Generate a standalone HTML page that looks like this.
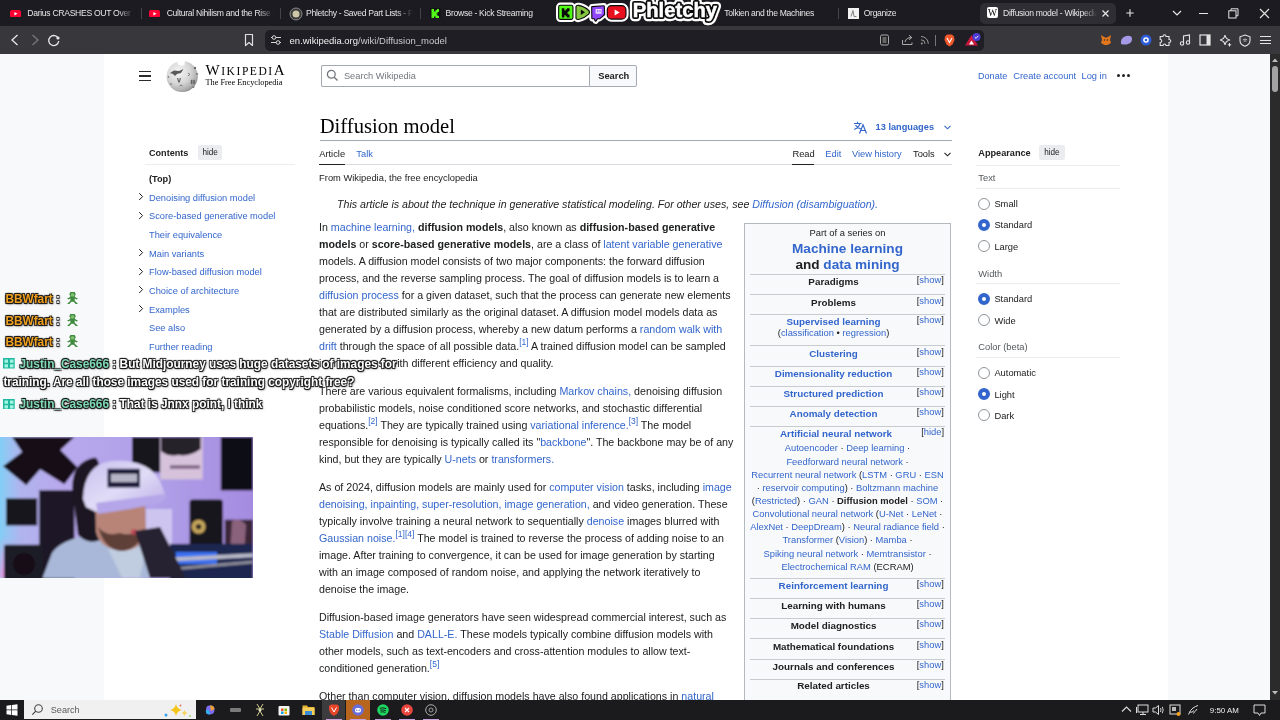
<!DOCTYPE html><html><head><meta charset="utf-8"><style>
html,body{margin:0;padding:0}
body{width:1280px;height:720px;overflow:hidden;position:relative;background:#f8f9fa;font-family:'Liberation Sans',sans-serif}
.r{position:absolute;display:block}
.t{position:absolute;white-space:nowrap}
.a{color:#3366cc}
.p{position:absolute;white-space:nowrap;font-size:10.667px;line-height:17.07px;color:#202122;font-family:'Liberation Sans',sans-serif}
.p b{font-weight:bold}
sup{font-size:80%;line-height:1;vertical-align:super;color:#3366cc}
.tabt{overflow:hidden;-webkit-mask-image:linear-gradient(90deg,#000 85%,transparent 100%);mask-image:linear-gradient(90deg,#000 85%,transparent 100%)}
.chat{position:absolute;white-space:nowrap;font-weight:bold;font-family:'Liberation Sans',sans-serif;
 text-shadow:-0.8px -0.8px 0.7px #151515,0.8px -0.8px 0.7px #151515,-0.8px 0.8px 0.7px #151515,0.8px 0.8px 0.7px #151515,0 0 1.5px #222,1px 1px 2.5px rgba(0,0,0,0.55)}
</style></head><body><div id="root" style="position:absolute;left:0;top:0;width:1280px;height:720px;overflow:hidden;will-change:transform"><div class="r" style="left:0.00px;top:54.00px;width:1280.00px;height:646.00px;background:#f8f9fa;"></div>
<div class="r" style="left:104.00px;top:54.00px;width:1064.00px;height:646.00px;background:#ffffff;"></div>
<div class="r" style="left:139.00px;top:71.00px;width:12.00px;height:1.35px;background:#2a2b2c;"></div>
<div class="r" style="left:139.00px;top:75.30px;width:12.00px;height:1.35px;background:#2a2b2c;"></div>
<div class="r" style="left:139.00px;top:79.60px;width:12.00px;height:1.35px;background:#2a2b2c;"></div>
<svg class="r" style="left:164.5px;top:60px" width="34" height="32" viewBox="0 0 34 32">
<defs><radialGradient id="gl" cx="0.38" cy="0.35" r="0.7"><stop offset="0" stop-color="#f6f6f6"/><stop offset="0.55" stop-color="#d6d6d6"/><stop offset="0.85" stop-color="#b0b0b0"/><stop offset="1" stop-color="#8a8a8a"/></radialGradient>
<filter id="gb"><feGaussianBlur stdDeviation="0.35"/></filter></defs>
<g filter="url(#gb)">
<circle cx="17.2" cy="16.5" r="15.6" fill="url(#gl)"/>
<path d="M11.5 0 L20 0 L19.5 5 Q16 6.5 13 4.5 Z" fill="#fff"/>
<path d="M5 13 L9 10.5 L14 11 L18.5 9 L16 13 L12 14 L10 16 L8 14 Z" fill="#5a5a5a"/>
<path d="M12 18 h1.2 l0.8 3 l0.8 -3 h1.2 l-1.2 4.5 h-1.6 Z" fill="#666"/>
<path d="M26 20 h1.2 v4 h-1.2 Z M28.5 20 h1.2 v4 h-1.2 Z M26 22 h3.7" fill="#666" stroke="#666" stroke-width="0.4"/>
<path d="M14.5 26 q1.5 -2 3 0" fill="none" stroke="#777" stroke-width="1"/>
<path d="M23 13 l2 1.5 l-2 1.5" fill="none" stroke="#777" stroke-width="0.9"/>
<circle cx="30" cy="8" r="1.2" fill="#6a6a6a"/><circle cx="32" cy="14" r="1" fill="#777"/><circle cx="28.5" cy="27" r="1" fill="#777"/><circle cx="6" cy="24" r="0.9" fill="#888"/><circle cx="3.5" cy="17" r="0.9" fill="#888"/>
</g></svg>
<div class="t " style="left:205.50px;top:63.24px;font-size:15.000px;line-height:15.000px;color:#000;font-weight:normal;font-family:'Liberation Serif', serif;letter-spacing:1.55px;">W<span style="font-size:0.77em">IKIPEDI</span>A</div>
<div class="t " style="left:205.50px;top:78.65px;font-size:8.300px;line-height:8.300px;color:#000;font-weight:normal;font-family:'Liberation Serif', serif;">The Free Encyclopedia</div>
<div class="r" style="left:321px;top:65px;width:268px;height:21.5px;box-sizing:border-box;border:1px solid #a2a9b1;border-right:none;border-radius:2px 0 0 2px;background:#fff"></div>
<div class="r" style="left:589px;top:65px;width:47.5px;height:21.5px;box-sizing:border-box;border:1px solid #a2a9b1;border-radius:0 2px 2px 0;background:#f8f9fa"></div>
<svg class="r" style="left:326.00px;top:69.00px;" width="13" height="13" viewBox="0 0 13 13"><circle cx="5.3" cy="5.3" r="3.9" fill="none" stroke="#72777d" stroke-width="1.3"/><line x1="8.2" y1="8.2" x2="11.5" y2="11.5" stroke="#72777d" stroke-width="1.4"/></svg>
<div class="t " style="left:343.90px;top:71.75px;font-size:9.270px;line-height:9.270px;color:#72777d;font-weight:normal;font-family:'Liberation Sans', sans-serif;">Search Wikipedia</div>
<div class="t " style="left:598.20px;top:71.70px;font-size:9.330px;line-height:9.330px;color:#202122;font-weight:bold;font-family:'Liberation Sans', sans-serif;">Search</div>
<div class="t " style="left:978.00px;top:71.80px;font-size:9.100px;line-height:9.100px;color:#3366cc;font-weight:normal;font-family:'Liberation Sans', sans-serif;">Donate</div>
<div class="t " style="left:1013.20px;top:71.64px;font-size:9.290px;line-height:9.290px;color:#3366cc;font-weight:normal;font-family:'Liberation Sans', sans-serif;">Create account</div>
<div class="t " style="left:1081.50px;top:71.64px;font-size:9.290px;line-height:9.290px;color:#3366cc;font-weight:normal;font-family:'Liberation Sans', sans-serif;">Log in</div>
<div class="r" style="left:1117.30px;top:74.3px;width:3px;height:3px;border-radius:50%;background:#202122"></div>
<div class="r" style="left:1121.90px;top:74.3px;width:3px;height:3px;border-radius:50%;background:#202122"></div>
<div class="r" style="left:1126.50px;top:74.3px;width:3px;height:3px;border-radius:50%;background:#202122"></div>
<div class="t " style="left:149.00px;top:148.80px;font-size:9.100px;line-height:9.100px;color:#202122;font-weight:bold;font-family:'Liberation Sans', sans-serif;">Contents</div>
<div class="r" style="left:197.50px;top:145.30px;width:24.80px;height:14.40px;background:#eaecf0;border-radius:2px;"></div>
<div class="t " style="left:202.40px;top:148.66px;font-size:8.200px;line-height:8.200px;color:#202122;font-weight:normal;font-family:'Liberation Sans', sans-serif;">hide</div>
<div class="r" style="left:145.30px;top:164.30px;width:149.40px;height:0.80px;background:#eaecf0;"></div>
<div class="t " style="left:149.00px;top:175.11px;font-size:9.200px;line-height:9.200px;color:#202122;font-weight:bold;font-family:'Liberation Sans', sans-serif;">(Top)</div>
<div class="t " style="left:149.00px;top:193.71px;font-size:9.290px;line-height:9.290px;color:#3366cc;font-weight:normal;font-family:'Liberation Sans', sans-serif;">Denoising diffusion model</div>
<svg class="r" style="left:137.00px;top:192.07px;" width="8" height="9" viewBox="0 0 8 9"><path d="M2.2 1.2 L5.6 4.6 L2.2 8" fill="none" stroke="#202122" stroke-width="1.0"/></svg>
<div class="t " style="left:149.00px;top:212.38px;font-size:9.290px;line-height:9.290px;color:#3366cc;font-weight:normal;font-family:'Liberation Sans', sans-serif;">Score-based generative model</div>
<svg class="r" style="left:137.00px;top:210.74px;" width="8" height="9" viewBox="0 0 8 9"><path d="M2.2 1.2 L5.6 4.6 L2.2 8" fill="none" stroke="#202122" stroke-width="1.0"/></svg>
<div class="t " style="left:149.00px;top:231.05px;font-size:9.290px;line-height:9.290px;color:#3366cc;font-weight:normal;font-family:'Liberation Sans', sans-serif;">Their equivalence</div>
<div class="t " style="left:149.00px;top:249.72px;font-size:9.290px;line-height:9.290px;color:#3366cc;font-weight:normal;font-family:'Liberation Sans', sans-serif;">Main variants</div>
<svg class="r" style="left:137.00px;top:248.08px;" width="8" height="9" viewBox="0 0 8 9"><path d="M2.2 1.2 L5.6 4.6 L2.2 8" fill="none" stroke="#202122" stroke-width="1.0"/></svg>
<div class="t " style="left:149.00px;top:268.39px;font-size:9.290px;line-height:9.290px;color:#3366cc;font-weight:normal;font-family:'Liberation Sans', sans-serif;">Flow-based diffusion model</div>
<svg class="r" style="left:137.00px;top:266.75px;" width="8" height="9" viewBox="0 0 8 9"><path d="M2.2 1.2 L5.6 4.6 L2.2 8" fill="none" stroke="#202122" stroke-width="1.0"/></svg>
<div class="t " style="left:149.00px;top:287.06px;font-size:9.290px;line-height:9.290px;color:#3366cc;font-weight:normal;font-family:'Liberation Sans', sans-serif;">Choice of architecture</div>
<svg class="r" style="left:137.00px;top:285.42px;" width="8" height="9" viewBox="0 0 8 9"><path d="M2.2 1.2 L5.6 4.6 L2.2 8" fill="none" stroke="#202122" stroke-width="1.0"/></svg>
<div class="t " style="left:149.00px;top:305.73px;font-size:9.290px;line-height:9.290px;color:#3366cc;font-weight:normal;font-family:'Liberation Sans', sans-serif;">Examples</div>
<svg class="r" style="left:137.00px;top:304.09px;" width="8" height="9" viewBox="0 0 8 9"><path d="M2.2 1.2 L5.6 4.6 L2.2 8" fill="none" stroke="#202122" stroke-width="1.0"/></svg>
<div class="t " style="left:149.00px;top:324.40px;font-size:9.290px;line-height:9.290px;color:#3366cc;font-weight:normal;font-family:'Liberation Sans', sans-serif;">See also</div>
<div class="t " style="left:149.00px;top:343.07px;font-size:9.290px;line-height:9.290px;color:#3366cc;font-weight:normal;font-family:'Liberation Sans', sans-serif;">Further reading</div>
<div class="t " style="left:319.75px;top:115.95px;font-size:20.600px;line-height:20.600px;color:#000;font-weight:normal;font-family:'Liberation Serif', serif;">Diffusion model</div>
<div class="r" style="left:319.75px;top:139.80px;width:632.00px;height:0.80px;background:#a2a9b1;"></div>
<svg class="r" style="left:853.00px;top:121.00px;" width="16" height="13" viewBox="0 0 16 13"><path d="M1 2.5 H8.5 M4.5 0.8 V2.5 M7 2.5 Q5.5 7 1.2 8.5 M2.5 4 Q4 7 8 8" fill="none" stroke="#36c" stroke-width="1.1"/><path d="M6.5 12.5 L10 3.8 L13.5 12.5 M7.8 9.5 H12.2" fill="none" stroke="#36c" stroke-width="1.2"/></svg>
<div class="t " style="left:875.60px;top:123.40px;font-size:9.220px;line-height:9.220px;color:#3366cc;font-weight:bold;font-family:'Liberation Sans', sans-serif;">13 languages</div>
<svg class="r" style="left:943.00px;top:124.00px;" width="9" height="7" viewBox="0 0 9 7"><path d="M1.5 1.8 L4.5 4.8 L7.5 1.8" fill="none" stroke="#36c" stroke-width="1.1"/></svg>
<div class="t " style="left:319.20px;top:149.70px;font-size:9.330px;line-height:9.330px;color:#202122;font-weight:normal;font-family:'Liberation Sans', sans-serif;">Article</div>
<div class="r" style="left:319.20px;top:163.90px;width:25.60px;height:1.40px;background:#202122;"></div>
<div class="t " style="left:356.30px;top:149.70px;font-size:9.330px;line-height:9.330px;color:#3366cc;font-weight:normal;font-family:'Liberation Sans', sans-serif;">Talk</div>
<div class="r" style="left:319.75px;top:164.40px;width:632.00px;height:0.90px;background:#d8dbdf;"></div>
<div class="r" style="left:319.20px;top:163.90px;width:25.60px;height:1.50px;background:#202122;"></div>
<div class="t " style="left:792.40px;top:149.70px;font-size:9.330px;line-height:9.330px;color:#202122;font-weight:normal;font-family:'Liberation Sans', sans-serif;">Read</div>
<div class="r" style="left:792.40px;top:163.60px;width:21.60px;height:1.50px;background:#202122;"></div>
<div class="t " style="left:825.30px;top:149.70px;font-size:9.330px;line-height:9.330px;color:#3366cc;font-weight:normal;font-family:'Liberation Sans', sans-serif;">Edit</div>
<div class="t " style="left:852.00px;top:149.77px;font-size:9.250px;line-height:9.250px;color:#3366cc;font-weight:normal;font-family:'Liberation Sans', sans-serif;">View history</div>
<div class="t " style="left:913.00px;top:149.70px;font-size:9.330px;line-height:9.330px;color:#202122;font-weight:normal;font-family:'Liberation Sans', sans-serif;">Tools</div>
<svg class="r" style="left:943.00px;top:151.00px;" width="9" height="7" viewBox="0 0 9 7"><path d="M1.5 1.8 L4.5 4.8 L7.5 1.8" fill="none" stroke="#202122" stroke-width="1.1"/></svg>
<div class="t " style="left:319.10px;top:173.60px;font-size:9.330px;line-height:9.330px;color:#202122;font-weight:normal;font-family:'Liberation Sans', sans-serif;">From Wikipedia, the free encyclopedia</div>
<div class="t " style="left:337.10px;top:199.20px;font-size:10.630px;line-height:10.630px;color:#202122;font-weight:normal;font-style:italic;font-family:'Liberation Sans', sans-serif;">This article is about the technique in generative statistical modeling. For other uses, see <span class="a">Diffusion (disambiguation).</span></div>
<div class="p" style="left:319px;top:218.57px">In <span class="a">machine learning,</span> <b>diffusion models</b>, also known as <b>diffusion-based generative</b><br><b>models</b> or <b>score-based generative models</b>, are a class of <span class="a">latent variable generative</span><br>models. A diffusion model consists of two major components: the forward diffusion<br>process, and the reverse sampling process. The goal of diffusion models is to learn a<br><span class="a">diffusion process</span> for a given dataset, such that the process can generate new elements<br>that are distributed similarly as the original dataset. A diffusion model models data as<br>generated by a diffusion process, whereby a new datum performs a <span class="a">random walk with</span><br><span class="a">drift</span> through the space of all possible data.<sup>[1]</sup> A trained diffusion model can be sampled<br>in many ways, with different efficiency and quality.</div>
<div class="p" style="left:319px;top:382.77px">There are various equivalent formalisms, including <span class="a">Markov chains,</span> denoising diffusion<br>probabilistic models, noise conditioned score networks, and stochastic differential<br>equations.<sup>[2]</sup> They are typically trained using <span class="a">variational inference.</span><sup>[3]</sup> The model<br>responsible for denoising is typically called its "<span class="a">backbone</span>". The backbone may be of any<br>kind, but they are typically <span class="a">U-nets</span> or <span class="a">transformers.</span></div>
<div class="p" style="left:319px;top:478.87px">As of 2024, diffusion models are mainly used for <span class="a">computer vision</span> tasks, including <span class="a">image</span><br><span class="a">denoising, inpainting, super-resolution, image generation,</span> and video generation. These<br>typically involve training a neural network to sequentially <span class="a">denoise</span> images blurred with<br><span class="a">Gaussian noise.</span><sup>[1][4]</sup> The model is trained to reverse the process of adding noise to an<br>image. After training to convergence, it can be used for image generation by starting<br>with an image composed of random noise, and applying the network iteratively to<br>denoise the image.</div>
<div class="p" style="left:319px;top:608.97px">Diffusion-based image generators have seen widespread commercial interest, such as<br><span class="a">Stable Diffusion</span> and <span class="a">DALL-E.</span> These models typically combine diffusion models with<br>other models, such as text-encoders and cross-attention modules to allow text-<br>conditioned generation.<sup>[5]</sup></div>
<div class="p" style="left:319px;top:687.87px">Other than computer vision, diffusion models have also found applications in <span class="a">natural</span></div>
<div class="r" style="left:744.2px;top:223.2px;width:207px;height:490px;box-sizing:border-box;border:1px solid #b4b9be;background:#f8f9fa"></div>
<div class="t" style="left:737.50px;width:220px;text-align:center;top:228.57px;font-size:9.37px;line-height:9.37px;color:#202122;font-weight:normal">Part of a series on</div>
<div class="t" style="left:737.50px;width:220px;text-align:center;top:241.80px;font-size:13.59px;line-height:13.59px;color:#202122;font-weight:bold"><span class="a">Machine learning</span></div>
<div class="t" style="left:737.50px;width:220px;text-align:center;top:257.60px;font-size:13.59px;line-height:13.59px;color:#202122;font-weight:bold">and <span class="a">data mining</span></div>
<div class="r" style="left:749.80px;top:274.10px;width:195.30px;height:1.10px;background:#c8ccd1;"></div>
<div class="t" style="left:723.50px;width:220px;text-align:center;top:277.27px;font-size:9.84px;line-height:9.84px;color:#202122;font-weight:bold">Paradigms</div>
<div class="t " style="left:916.70px;top:276.36px;font-size:9.377px;line-height:9.377px;color:#202122;font-weight:normal;font-family:'Liberation Sans', sans-serif;">[<span class="a">show</span>]</div>
<div class="r" style="left:749.80px;top:294.30px;width:195.30px;height:1.10px;background:#c8ccd1;"></div>
<div class="t" style="left:723.50px;width:220px;text-align:center;top:298.17px;font-size:9.84px;line-height:9.84px;color:#202122;font-weight:bold">Problems</div>
<div class="t " style="left:916.70px;top:297.26px;font-size:9.377px;line-height:9.377px;color:#202122;font-weight:normal;font-family:'Liberation Sans', sans-serif;">[<span class="a">show</span>]</div>
<div class="r" style="left:749.80px;top:313.80px;width:195.30px;height:1.10px;background:#c8ccd1;"></div>
<div class="t" style="left:723.50px;width:220px;text-align:center;top:316.87px;font-size:9.84px;line-height:9.84px;color:#202122;font-weight:bold"><span class="a">Supervised learning</span></div>
<div class="t" style="left:723.50px;width:220px;text-align:center;top:328.87px;font-size:9.37px;line-height:9.37px;color:#202122;font-weight:normal">(<span class="a">classification</span> • <span class="a">regression</span>)</div>
<div class="t " style="left:916.70px;top:315.96px;font-size:9.377px;line-height:9.377px;color:#202122;font-weight:normal;font-family:'Liberation Sans', sans-serif;">[<span class="a">show</span>]</div>
<div class="r" style="left:749.80px;top:345.00px;width:195.30px;height:1.10px;background:#c8ccd1;"></div>
<div class="t" style="left:723.50px;width:220px;text-align:center;top:348.97px;font-size:9.84px;line-height:9.84px;color:#202122;font-weight:bold"><span class="a">Clustering</span></div>
<div class="t " style="left:916.70px;top:348.06px;font-size:9.377px;line-height:9.377px;color:#202122;font-weight:normal;font-family:'Liberation Sans', sans-serif;">[<span class="a">show</span>]</div>
<div class="r" style="left:749.80px;top:366.00px;width:195.30px;height:1.10px;background:#c8ccd1;"></div>
<div class="t" style="left:723.50px;width:220px;text-align:center;top:369.37px;font-size:9.84px;line-height:9.84px;color:#202122;font-weight:bold"><span class="a">Dimensionality reduction</span></div>
<div class="t " style="left:916.70px;top:368.46px;font-size:9.377px;line-height:9.377px;color:#202122;font-weight:normal;font-family:'Liberation Sans', sans-serif;">[<span class="a">show</span>]</div>
<div class="r" style="left:749.80px;top:385.80px;width:195.30px;height:1.10px;background:#c8ccd1;"></div>
<div class="t" style="left:723.50px;width:220px;text-align:center;top:389.37px;font-size:9.84px;line-height:9.84px;color:#202122;font-weight:bold"><span class="a">Structured prediction</span></div>
<div class="t " style="left:916.70px;top:388.46px;font-size:9.377px;line-height:9.377px;color:#202122;font-weight:normal;font-family:'Liberation Sans', sans-serif;">[<span class="a">show</span>]</div>
<div class="r" style="left:749.80px;top:405.70px;width:195.30px;height:1.10px;background:#c8ccd1;"></div>
<div class="t" style="left:723.50px;width:220px;text-align:center;top:409.27px;font-size:9.84px;line-height:9.84px;color:#202122;font-weight:bold"><span class="a">Anomaly detection</span></div>
<div class="t " style="left:916.70px;top:408.36px;font-size:9.377px;line-height:9.377px;color:#202122;font-weight:normal;font-family:'Liberation Sans', sans-serif;">[<span class="a">show</span>]</div>
<div class="r" style="left:749.80px;top:425.90px;width:195.30px;height:1.10px;background:#c8ccd1;"></div>
<div class="t" style="left:726.00px;width:220px;text-align:center;top:429.27px;font-size:9.84px;line-height:9.84px;color:#202122;font-weight:bold"><span class="a">Artificial neural network</span></div>
<div class="t " style="left:921.20px;top:428.36px;font-size:9.377px;line-height:9.377px;color:#202122;font-weight:normal;font-family:'Liberation Sans', sans-serif;">[<span class="a">hide</span>]</div>
<div class="t" style="left:737.50px;width:220px;text-align:center;top:444.47px;font-size:9.37px;line-height:9.37px;color:#202122;font-weight:normal"><span class="a">Autoencoder</span> · <span class="a">Deep learning</span> ·</div>
<div class="t" style="left:737.50px;width:220px;text-align:center;top:457.61px;font-size:9.37px;line-height:9.37px;color:#202122;font-weight:normal"><span class="a">Feedforward neural network</span> ·</div>
<div class="t" style="left:737.50px;width:220px;text-align:center;top:470.75px;font-size:9.37px;line-height:9.37px;color:#202122;font-weight:normal"><span class="a">Recurrent neural network</span> (<span class="a">LSTM</span> · <span class="a">GRU</span> · <span class="a">ESN</span></div>
<div class="t" style="left:737.50px;width:220px;text-align:center;top:483.89px;font-size:9.37px;line-height:9.37px;color:#202122;font-weight:normal">· <span class="a">reservoir computing</span>) · <span class="a">Boltzmann machine</span></div>
<div class="t" style="left:737.50px;width:220px;text-align:center;top:497.03px;font-size:9.37px;line-height:9.37px;color:#202122;font-weight:normal">(<span class="a">Restricted</span>) · <span class="a">GAN</span> · <b>Diffusion model</b> · <span class="a">SOM</span> ·</div>
<div class="t" style="left:737.50px;width:220px;text-align:center;top:510.17px;font-size:9.37px;line-height:9.37px;color:#202122;font-weight:normal"><span class="a">Convolutional neural network</span> (<span class="a">U-Net</span> · <span class="a">LeNet</span> ·</div>
<div class="t" style="left:737.50px;width:220px;text-align:center;top:523.31px;font-size:9.37px;line-height:9.37px;color:#202122;font-weight:normal"><span class="a">AlexNet</span> · <span class="a">DeepDream</span>) · <span class="a">Neural radiance field</span> ·</div>
<div class="t" style="left:737.50px;width:220px;text-align:center;top:536.45px;font-size:9.37px;line-height:9.37px;color:#202122;font-weight:normal"><span class="a">Transformer</span> (<span class="a">Vision</span>) · <span class="a">Mamba</span> ·</div>
<div class="t" style="left:737.50px;width:220px;text-align:center;top:549.59px;font-size:9.37px;line-height:9.37px;color:#202122;font-weight:normal"><span class="a">Spiking neural network</span> · <span class="a">Memtransistor</span> ·</div>
<div class="t" style="left:737.50px;width:220px;text-align:center;top:562.73px;font-size:9.37px;line-height:9.37px;color:#202122;font-weight:normal"><span class="a">Electrochemical RAM</span> (ECRAM)</div>
<div class="r" style="left:749.80px;top:578.30px;width:195.30px;height:1.10px;background:#c8ccd1;"></div>
<div class="t" style="left:723.50px;width:220px;text-align:center;top:581.27px;font-size:9.84px;line-height:9.84px;color:#3366cc;font-weight:bold">Reinforcement learning</div>
<div class="t " style="left:916.70px;top:580.36px;font-size:9.377px;line-height:9.377px;color:#202122;font-weight:normal;font-family:'Liberation Sans', sans-serif;">[<span class="a">show</span>]</div>
<div class="r" style="left:749.80px;top:598.30px;width:195.30px;height:1.10px;background:#c8ccd1;"></div>
<div class="t" style="left:723.50px;width:220px;text-align:center;top:601.27px;font-size:9.84px;line-height:9.84px;color:#202122;font-weight:bold">Learning with humans</div>
<div class="t " style="left:916.70px;top:600.36px;font-size:9.377px;line-height:9.377px;color:#202122;font-weight:normal;font-family:'Liberation Sans', sans-serif;">[<span class="a">show</span>]</div>
<div class="r" style="left:749.80px;top:618.10px;width:195.30px;height:1.10px;background:#c8ccd1;"></div>
<div class="t" style="left:723.50px;width:220px;text-align:center;top:620.77px;font-size:9.84px;line-height:9.84px;color:#202122;font-weight:bold">Model diagnostics</div>
<div class="t " style="left:916.70px;top:619.86px;font-size:9.377px;line-height:9.377px;color:#202122;font-weight:normal;font-family:'Liberation Sans', sans-serif;">[<span class="a">show</span>]</div>
<div class="r" style="left:749.80px;top:638.20px;width:195.30px;height:1.10px;background:#c8ccd1;"></div>
<div class="t" style="left:723.50px;width:220px;text-align:center;top:641.77px;font-size:9.84px;line-height:9.84px;color:#202122;font-weight:bold">Mathematical foundations</div>
<div class="t " style="left:916.70px;top:640.86px;font-size:9.377px;line-height:9.377px;color:#202122;font-weight:normal;font-family:'Liberation Sans', sans-serif;">[<span class="a">show</span>]</div>
<div class="r" style="left:749.80px;top:658.60px;width:195.30px;height:1.10px;background:#c8ccd1;"></div>
<div class="t" style="left:723.50px;width:220px;text-align:center;top:661.57px;font-size:9.84px;line-height:9.84px;color:#202122;font-weight:bold">Journals and conferences</div>
<div class="t " style="left:916.70px;top:660.66px;font-size:9.377px;line-height:9.377px;color:#202122;font-weight:normal;font-family:'Liberation Sans', sans-serif;">[<span class="a">show</span>]</div>
<div class="r" style="left:749.80px;top:678.50px;width:195.30px;height:1.10px;background:#c8ccd1;"></div>
<div class="t" style="left:723.50px;width:220px;text-align:center;top:681.47px;font-size:9.84px;line-height:9.84px;color:#202122;font-weight:bold">Related articles</div>
<div class="t " style="left:916.70px;top:680.56px;font-size:9.377px;line-height:9.377px;color:#202122;font-weight:normal;font-family:'Liberation Sans', sans-serif;">[<span class="a">show</span>]</div>
<div class="t " style="left:978.30px;top:149.14px;font-size:9.170px;line-height:9.170px;color:#202122;font-weight:bold;font-family:'Liberation Sans', sans-serif;">Appearance</div>
<div class="r" style="left:1039.40px;top:145.20px;width:25.80px;height:14.60px;background:#eaecf0;border-radius:2px;"></div>
<div class="t " style="left:1044.20px;top:148.86px;font-size:8.200px;line-height:8.200px;color:#202122;font-weight:normal;font-family:'Liberation Sans', sans-serif;">hide</div>
<div class="r" style="left:976.00px;top:164.80px;width:144.00px;height:0.80px;background:#eaecf0;"></div>
<div class="t " style="left:978.30px;top:173.80px;font-size:9.330px;line-height:9.330px;color:#54595d;font-weight:normal;font-family:'Liberation Sans', sans-serif;">Text</div>
<div class="r" style="left:976.00px;top:188.00px;width:144.00px;height:0.80px;background:#eaecf0;"></div>
<div class="r" style="left:978px;top:197.50px;width:12px;height:12px;border-radius:50%;box-sizing:border-box;border:1.2px solid #8f959b;background:#fff"></div>
<div class="t " style="left:994.40px;top:199.80px;font-size:9.330px;line-height:9.330px;color:#202122;font-weight:normal;font-family:'Liberation Sans', sans-serif;">Small</div>
<div class="r" style="left:978px;top:218.90px;width:12px;height:12px;border-radius:50%;box-sizing:border-box;border:4.1px solid #3366cc;background:#fff"></div>
<div class="t " style="left:994.40px;top:221.20px;font-size:9.330px;line-height:9.330px;color:#202122;font-weight:normal;font-family:'Liberation Sans', sans-serif;">Standard</div>
<div class="r" style="left:978px;top:240.20px;width:12px;height:12px;border-radius:50%;box-sizing:border-box;border:1.2px solid #8f959b;background:#fff"></div>
<div class="t " style="left:994.40px;top:242.50px;font-size:9.330px;line-height:9.330px;color:#202122;font-weight:normal;font-family:'Liberation Sans', sans-serif;">Large</div>
<div class="t " style="left:978.30px;top:269.60px;font-size:9.330px;line-height:9.330px;color:#54595d;font-weight:normal;font-family:'Liberation Sans', sans-serif;">Width</div>
<div class="r" style="left:976.00px;top:283.00px;width:144.00px;height:0.80px;background:#eaecf0;"></div>
<div class="r" style="left:978px;top:292.80px;width:12px;height:12px;border-radius:50%;box-sizing:border-box;border:4.1px solid #3366cc;background:#fff"></div>
<div class="t " style="left:994.40px;top:295.10px;font-size:9.330px;line-height:9.330px;color:#202122;font-weight:normal;font-family:'Liberation Sans', sans-serif;">Standard</div>
<div class="r" style="left:978px;top:314.20px;width:12px;height:12px;border-radius:50%;box-sizing:border-box;border:1.2px solid #8f959b;background:#fff"></div>
<div class="t " style="left:994.40px;top:316.50px;font-size:9.330px;line-height:9.330px;color:#202122;font-weight:normal;font-family:'Liberation Sans', sans-serif;">Wide</div>
<div class="t " style="left:978.30px;top:342.90px;font-size:9.330px;line-height:9.330px;color:#54595d;font-weight:normal;font-family:'Liberation Sans', sans-serif;">Color (beta)</div>
<div class="r" style="left:976.00px;top:357.20px;width:144.00px;height:0.80px;background:#eaecf0;"></div>
<div class="r" style="left:978px;top:367.10px;width:12px;height:12px;border-radius:50%;box-sizing:border-box;border:1.2px solid #8f959b;background:#fff"></div>
<div class="t " style="left:994.40px;top:369.40px;font-size:9.330px;line-height:9.330px;color:#202122;font-weight:normal;font-family:'Liberation Sans', sans-serif;">Automatic</div>
<div class="r" style="left:978px;top:388.20px;width:12px;height:12px;border-radius:50%;box-sizing:border-box;border:4.1px solid #3366cc;background:#fff"></div>
<div class="t " style="left:994.40px;top:390.50px;font-size:9.330px;line-height:9.330px;color:#202122;font-weight:normal;font-family:'Liberation Sans', sans-serif;">Light</div>
<div class="r" style="left:978px;top:409.40px;width:12px;height:12px;border-radius:50%;box-sizing:border-box;border:1.2px solid #8f959b;background:#fff"></div>
<div class="t " style="left:994.40px;top:411.70px;font-size:9.330px;line-height:9.330px;color:#202122;font-weight:normal;font-family:'Liberation Sans', sans-serif;">Dark</div>
<div class="r" style="left:1270.00px;top:54.00px;width:10.00px;height:646.00px;background:#2b2b2b;"></div>
<svg class="r" style="left:1270.00px;top:56.00px;" width="10" height="8" viewBox="0 0 10 8"><path d="M2 6 L5 2.5 L8 6 Z" fill="#bdbdbd"/></svg>
<div class="r" style="left:1272.00px;top:66.00px;width:6.00px;height:26.00px;background:#a3a3a3;border-radius:3px;"></div>
<svg class="r" style="left:1270.00px;top:689.00px;" width="10" height="8" viewBox="0 0 10 8"><path d="M2 2 L5 5.5 L8 2 Z" fill="#bdbdbd"/></svg>
<div class="r" style="left:0.00px;top:0.00px;width:1280.00px;height:26.00px;background:#1c1b21;"></div>
<div class="r" style="left:0.00px;top:26.00px;width:1280.00px;height:28.00px;background:#38373c;"></div>
<div class="r" style="left:979.70px;top:2.50px;width:135.90px;height:21.30px;background:#2f2e34;border-radius:5px;"></div>
<svg class="r" style="left:10.00px;top:9.50px;" width="11" height="7.5" viewBox="0 0 11 7.5"><rect x="0" y="0" width="11" height="7.5" rx="2" fill="#ff0033"/><path d="M4.4 1.9 L7.5 3.8 L4.4 5.6 Z" fill="#fff"/></svg>
<div class="t tabt" style="left:27.30px;top:9.02px;width:107px;font-size:8.6px;line-height:8.6px;letter-spacing:-0.3px;color:#e6e6e8">Darius CRASHES OUT Over Xehanort Again</div>
<div class="r" style="left:140.90px;top:8.00px;width:1.00px;height:11.00px;background:#45444a;"></div>
<svg class="r" style="left:149.40px;top:9.50px;" width="11" height="7.5" viewBox="0 0 11 7.5"><rect x="0" y="0" width="11" height="7.5" rx="2" fill="#ff0033"/><path d="M4.4 1.9 L7.5 3.8 L4.4 5.6 Z" fill="#fff"/></svg>
<div class="t tabt" style="left:166.70px;top:9.02px;width:107px;font-size:8.6px;line-height:8.6px;letter-spacing:-0.3px;color:#e6e6e8">Cultural Nihilism and the Rise of</div>
<div class="r" style="left:280.30px;top:8.00px;width:1.00px;height:11.00px;background:#45444a;"></div>
<svg class="r" style="left:288.80px;top:6.50px;" width="14" height="14" viewBox="0 0 14 14"><circle cx="7" cy="7" r="6" fill="#3a3a3a" stroke="#888" stroke-width="1"/><circle cx="7" cy="7" r="3.5" fill="#cfc7a8"/></svg>
<div class="t tabt" style="left:306.10px;top:9.02px;width:107px;font-size:8.6px;line-height:8.6px;letter-spacing:-0.3px;color:#e6e6e8">Phletchy - Saved Part Lists - PCPartPicker</div>
<div class="r" style="left:419.70px;top:8.00px;width:1.00px;height:11.00px;background:#45444a;"></div>
<svg class="r" style="left:430.20px;top:8.20px;" width="10.5" height="10" viewBox="0 0 10.5 10"><rect x="0" y="0" width="10.5" height="10" fill="#111"/><path d="M1.5 1 h2.5 v2.5 h1.5 v-1.5 h1.5 v-1 h2 v3 h-1.5 v1.5 h-1 v1 h1 v1.5 h1.5 v3 h-2 v-1 h-1.5 v-1.5 h-1.5 v2.5 h-2.5 z" fill="#53fc18"/></svg>
<div class="t tabt" style="left:445.50px;top:9.02px;width:107px;font-size:8.6px;line-height:8.6px;letter-spacing:-0.3px;color:#e6e6e8">Browse - Kick Streaming</div>
<div class="r" style="left:559.10px;top:8.00px;width:1.00px;height:11.00px;background:#45444a;"></div>
<svg class="r" style="left:567.60px;top:9.50px;" width="11" height="7.5" viewBox="0 0 11 7.5"><rect x="0" y="0" width="11" height="7.5" rx="2" fill="#ff0033"/><path d="M4.4 1.9 L7.5 3.8 L4.4 5.6 Z" fill="#fff"/></svg>
<div class="t tabt" style="left:584.90px;top:9.02px;width:107px;font-size:8.6px;line-height:8.6px;letter-spacing:-0.3px;color:#e6e6e8">Kick Stream Thing</div>
<div class="r" style="left:698.50px;top:8.00px;width:1.00px;height:11.00px;background:#45444a;"></div>
<svg class="r" style="left:707.00px;top:9.50px;" width="11" height="7.5" viewBox="0 0 11 7.5"><rect x="0" y="0" width="11" height="7.5" rx="2" fill="#ff0033"/><path d="M4.4 1.9 L7.5 3.8 L4.4 5.6 Z" fill="#fff"/></svg>
<div class="t tabt" style="left:724.30px;top:9.02px;width:107px;font-size:8.6px;line-height:8.6px;letter-spacing:-0.3px;color:#e6e6e8">Tolkien and the Machines</div>
<div class="r" style="left:837.90px;top:8.00px;width:1.00px;height:11.00px;background:#45444a;"></div>
<svg class="r" style="left:848.00px;top:7.70px;" width="11" height="11" viewBox="0 0 11 11"><rect width="11" height="11" fill="#f2f2f2"/><path d="M3 8.5 L5 2.5 L6 8.5 M6 8.5 L8.5 8.5" stroke="#777" stroke-width="0.9" fill="none"/></svg>
<div class="t tabt" style="left:863.70px;top:9.02px;width:107px;font-size:8.6px;line-height:8.6px;letter-spacing:-0.3px;color:#e6e6e8">Organize</div>
<svg class="r" style="left:987.00px;top:7.40px;" width="11" height="11" viewBox="0 0 11 11"><rect width="11" height="11" rx="2" fill="#fff"/><text x="5.5" y="9" text-anchor="middle" font-family="Liberation Serif" font-size="9.5" fill="#000">W</text></svg>
<div class="t tabt" style="left:1003.10px;top:9.02px;width:94px;font-size:8.6px;line-height:8.6px;letter-spacing:-0.3px;color:#e6e6e8">Diffusion model - Wikipedia</div>
<svg class="r" style="left:1101.00px;top:8.50px;" width="9" height="9" viewBox="0 0 9 9"><path d="M1.5 1.5 L7.5 7.5 M7.5 1.5 L1.5 7.5" stroke="#e6e6e6" stroke-width="1.2"/></svg>
<svg class="r" style="left:1125.80px;top:8.80px;" width="8" height="8" viewBox="0 0 8 8"><path d="M4 0.3 V7.7 M0.3 4 H7.7" stroke="#e6e6e6" stroke-width="1.1"/></svg>
<svg class="r" style="left:1171.50px;top:10.00px;" width="10" height="6" viewBox="0 0 10 6"><path d="M1 1 L5 5 L9 1" fill="none" stroke="#e6e6e6" stroke-width="1.2"/></svg>
<div class="r" style="left:1198.60px;top:12.80px;width:9.00px;height:1.10px;background:#e6e6e6;"></div>
<svg class="r" style="left:1228.00px;top:7.50px;" width="11" height="11" viewBox="0 0 11 11"><rect x="0.8" y="2.8" width="7.2" height="7.2" fill="none" stroke="#e6e6e6" stroke-width="1"/><path d="M3 2.8 V0.8 H10 V7.8 H8" fill="none" stroke="#e6e6e6" stroke-width="1"/></svg>
<svg class="r" style="left:1258.50px;top:7.50px;" width="11" height="11" viewBox="0 0 11 11"><path d="M1 1 L10 10 M10 1 L1 10" stroke="#e6e6e6" stroke-width="1.1"/></svg>
<svg class="r" style="left:8.00px;top:33.00px;" width="14" height="14" viewBox="0 0 14 14"><path d="M9.5 2 L4 7 L9.5 12" fill="none" stroke="#e8e8e8" stroke-width="1.3"/></svg>
<svg class="r" style="left:28.00px;top:33.00px;" width="14" height="14" viewBox="0 0 14 14"><path d="M4.5 2 L10 7 L4.5 12" fill="none" stroke="#77767b" stroke-width="1.3"/></svg>
<svg class="r" style="left:47.00px;top:33.00px;" width="14" height="14" viewBox="0 0 14 14"><path d="M11.3 5.5 A5 5 0 1 0 11.7 8" fill="none" stroke="#e8e8e8" stroke-width="1.3"/><circle cx="11" cy="5" r="1.6" fill="#e8e8e8"/></svg>
<svg class="r" style="left:243.00px;top:33.00px;" width="12" height="14" viewBox="0 0 12 14"><path d="M2.5 1.5 H9.5 V12.5 L6 9.5 L2.5 12.5 Z" fill="none" stroke="#e0e0e0" stroke-width="1.2" stroke-linejoin="round"/></svg>
<div class="r" style="left:265.20px;top:30.00px;width:719.00px;height:20.50px;background:#1f1e24;border-radius:5px;"></div>
<svg class="r" style="left:270.00px;top:34.00px;" width="12" height="12" viewBox="0 0 12 12"><path d="M1 3.5 H11 M1 8.5 H11" stroke="#d8d8d8" stroke-width="1"/><circle cx="4" cy="3.5" r="1.8" fill="#1f1e24" stroke="#d8d8d8" stroke-width="1"/><circle cx="8" cy="8.5" r="1.8" fill="#1f1e24" stroke="#d8d8d8" stroke-width="1"/></svg>
<div class="t " style="left:289.60px;top:35.98px;font-size:9.470px;line-height:9.470px;color:#202122;font-weight:normal;font-family:'Liberation Sans', sans-serif;"><span style="color:#f0f0f2">en.wikipedia.org</span><span style="color:#c9c9cc">/wiki/Diffusion_model</span></div>
<svg class="r" style="left:879.00px;top:34.00px;" width="11" height="12" viewBox="0 0 11 12"><rect x="1.5" y="1" width="8" height="10" rx="1.5" fill="none" stroke="#aaa" stroke-width="1"/><rect x="3.5" y="3" width="4" height="6" fill="#666"/></svg>
<svg class="r" style="left:901.00px;top:34.00px;" width="13" height="12" viewBox="0 0 13 12"><path d="M1.5 6 V10.5 H11 V8.5" fill="none" stroke="#aaa" stroke-width="1"/><path d="M4 8 Q5 3.5 10.5 3.5 M8 1.2 L10.8 3.5 L8 5.8" fill="none" stroke="#aaa" stroke-width="1"/></svg>
<svg class="r" style="left:920.00px;top:34.00px;" width="10" height="12" viewBox="0 0 10 12"><circle cx="1.8" cy="9.5" r="1" fill="#999"/><path d="M1 5.8 A4 4 0 0 1 5 9.8 M1 2.5 A7.2 7.2 0 0 1 8.3 9.8" fill="none" stroke="#999" stroke-width="1"/></svg>
<div class="r" style="left:935.30px;top:34.50px;width:0.90px;height:11.00px;background:#777;"></div>
<svg class="r" style="left:943.50px;top:33.50px;" width="11" height="13" viewBox="0 0 11 13"><path d="M1 2.5 L3 0.5 H8 L10 2.5 L10.5 6 L8.5 10.5 L5.5 12.5 L2.5 10.5 L0.5 6 Z" fill="#f0582b"/><path d="M3 4 L5.5 8.5 L8 4" fill="none" stroke="#fff" stroke-width="1.1"/></svg>
<svg class="r" style="left:964.00px;top:31.50px;" width="18" height="15" viewBox="0 0 18 15"><path d="M1 13.5 L7.5 3 L14 13.5 Z" fill="#c8193c"/><path d="M5 12.5 L7.5 8.5 L10 12.5 Z" fill="#fff"/><circle cx="12.5" cy="5" r="4" fill="#4b3dd6"/><path d="M10.8 5.1 L12.1 6.3 L14.3 3.8" fill="none" stroke="#fff" stroke-width="0.9"/></svg>
<svg class="r" style="left:1099.50px;top:34.00px;" width="12" height="12" viewBox="0 0 12 12"><path d="M1 1 L5 3.5 H7 L11 1 L10 6 L11 9 L7.5 11 H4.5 L1 9 L2 6 Z" fill="#e2761b"/><circle cx="4.5" cy="6" r="0.8" fill="#333"/><circle cx="7.5" cy="6" r="0.8" fill="#333"/></svg>
<svg class="r" style="left:1119.50px;top:35.00px;" width="13" height="10" viewBox="0 0 13 10"><path d="M1 9 Q0 3 6 1 Q12 0 12 4 Q12 8 8 9 Q5 10 1 9 Z" fill="#a59ae8"/></svg>
<svg class="r" style="left:1139.50px;top:34.00px;" width="12" height="12" viewBox="0 0 12 12"><circle cx="6" cy="6" r="5.5" fill="#2f5cd8"/><circle cx="6" cy="6" r="2.8" fill="#fff"/><circle cx="6" cy="6" r="1.3" fill="#2f5cd8"/></svg>
<svg class="r" style="left:1158.50px;top:33.50px;" width="13" height="13" viewBox="0 0 13 13"><path d="M4 2.5 Q4 0.8 5.5 0.8 Q7 0.8 7 2.5 H10 V5.5 Q11.8 5.5 11.8 7 Q11.8 8.5 10 8.5 V11.5 H7 Q7 10 5.5 10 Q4 10 4 11.5 H1.2 V8.5 Q2.8 8.5 2.8 7 Q2.8 5.5 1.2 5.5 V2.5 Z" fill="none" stroke="#e4e4e4" stroke-width="1.1"/></svg>
<svg class="r" style="left:1179.00px;top:34.00px;" width="12" height="12" viewBox="0 0 12 12"><path d="M4.5 9.5 V2 L10.5 1 V8.5" fill="none" stroke="#e4e4e4" stroke-width="1.1"/><circle cx="3" cy="9.5" r="1.7" fill="none" stroke="#e4e4e4" stroke-width="1.1"/><circle cx="9" cy="8.5" r="1.7" fill="none" stroke="#e4e4e4" stroke-width="1.1"/></svg>
<svg class="r" style="left:1199.00px;top:34.00px;" width="12" height="12" viewBox="0 0 12 12"><rect x="1" y="1" width="10" height="10" fill="none" stroke="#e4e4e4" stroke-width="1.2"/><rect x="7.5" y="1" width="3.5" height="10" fill="#e4e4e4"/></svg>
<svg class="r" style="left:1219.00px;top:33.50px;" width="13" height="13" viewBox="0 0 13 13"><path d="M6 1 Q6.7 5.3 11 6 Q6.7 6.7 6 11 Q5.3 6.7 1 6 Q5.3 5.3 6 1 Z" fill="none" stroke="#e4e4e4" stroke-width="1.1"/><path d="M10.5 9 V12.5 M8.8 10.8 H12.2" stroke="#e4e4e4" stroke-width="1"/></svg>
<svg class="r" style="left:1239.00px;top:33.50px;" width="12" height="13" viewBox="0 0 12 13"><path d="M6 1 L11 2.8 V6.5 Q11 10.5 6 12.3 Q1 10.5 1 6.5 V2.8 Z" fill="none" stroke="#e4e4e4" stroke-width="1.1"/><path d="M3.8 6 Q6 4 8.2 6 M4.8 7.3 Q6 6.3 7.2 7.3" fill="none" stroke="#e4e4e4" stroke-width="0.8"/></svg>
<div class="r" style="left:1259.50px;top:36.20px;width:11.00px;height:1.30px;background:#e4e4e4;"></div>
<div class="r" style="left:1259.50px;top:39.60px;width:11.00px;height:1.30px;background:#e4e4e4;"></div>
<div class="r" style="left:1259.50px;top:43.00px;width:11.00px;height:1.30px;background:#e4e4e4;"></div>
<svg class="r" style="left:550px;top:0px" width="180" height="27" viewBox="0 0 180 27"><g fill="#fff" stroke="#fff" stroke-width="6.4" stroke-linejoin="round"><rect x="9.2" y="5.8" width="13.2" height="13" rx="1.2"/><path d="M26.5 8 Q26 5.6 28.6 5.9 Q34.5 7 38.3 10.8 Q39.6 12.3 38.3 13.8 Q34.5 17.6 28.6 18.9 Q26 19.3 26.5 16.7 Z"/><path d="M42.2 7.2 L53.8 6.3 L54.1 14.3 L49.6 18.2 L47.3 18.2 L45.6 20.6 L44.6 18.2 L42.4 18.2 Z"/><rect x="57.8" y="6.2" width="17.6" height="12.4" rx="3.6"/></g><g fill="#fff" stroke="#fff" stroke-width="8.4" stroke-linejoin="round"><text x="82.8" y="17.4" font-family="Liberation Sans" font-weight="bold" font-size="20.2">Phletchy</text></g><g fill="#0a0a0a" stroke="#0a0a0a" stroke-width="2.2" stroke-linejoin="round"><rect x="9.2" y="5.8" width="13.2" height="13" rx="1.2"/><path d="M26.5 8 Q26 5.6 28.6 5.9 Q34.5 7 38.3 10.8 Q39.6 12.3 38.3 13.8 Q34.5 17.6 28.6 18.9 Q26 19.3 26.5 16.7 Z"/><path d="M42.2 7.2 L53.8 6.3 L54.1 14.3 L49.6 18.2 L47.3 18.2 L45.6 20.6 L44.6 18.2 L42.4 18.2 Z"/><rect x="57.8" y="6.2" width="17.6" height="12.4" rx="3.6"/></g><g fill="#0a0a0a" stroke="#0a0a0a" stroke-width="4.0" stroke-linejoin="round"><text x="82.8" y="17.4" font-family="Liberation Sans" font-weight="bold" font-size="20.2">Phletchy</text></g><g fill="#fff" stroke="#fff" stroke-width="0.5"><text x="82.8" y="17.4" font-family="Liberation Sans" font-weight="bold" font-size="20.2">Phletchy</text></g><g fill="#53fc18"><rect x="9.2" y="5.8" width="13.2" height="13" rx="1.2"/></g><path d="M11.8 8.2 h2.6 v2.4 h1.3 v-1.3 h1.3 v-1.1 h2.6 v3 h-1.3 v1.3 h-1.3 v0.8 h1.3 v1.3 h1.3 v3 h-2.6 v-1.1 h-1.3 v-1.3 h-1.3 v2.4 h-2.6 z" fill="#0a0a0a"/><g fill="#85c742"><path d="M26.5 8 Q26 5.6 28.6 5.9 Q34.5 7 38.3 10.8 Q39.6 12.3 38.3 13.8 Q34.5 17.6 28.6 18.9 Q26 19.3 26.5 16.7 Z"/></g><path d="M30.8 9.6 L35 12.3 L30.8 15 Z" fill="#0a0a0a"/><g fill="#9146ff"><path d="M42.2 7.2 L53.8 6.3 L54.1 14.3 L49.6 18.2 L47.3 18.2 L45.6 20.6 L44.6 18.2 L42.4 18.2 Z"/></g><rect x="45.6" y="9" width="6" height="4.8" fill="#e6d6ff"/><rect x="47.3" y="10" width="0.9" height="2.2" fill="#9146ff"/><rect x="49.5" y="10" width="0.9" height="2.2" fill="#9146ff"/><g fill="#e8101e"><rect x="57.8" y="6.2" width="17.6" height="12.4" rx="3.6"/></g><path d="M64.6 9.4 L69.6 12.4 L64.6 15.4 Z" fill="#fff"/></svg>
<div class="chat" style="left:5.4px;top:290.97px;font-size:11.85px;line-height:11.85px"><span style="color:#f0a020">BBWfart</span><span style="color:#fff"> : </span><svg width="14" height="14" viewBox="0 0 13 13" style="vertical-align:-2px;margin-left:2px"><path d="M5 1 h4 l1 2 -1 2 1 1 2 1 -1 1 -2 -1 0 2 2 2 1 1 h-2 l-2 -2 h-2 l-2 2 h-2 l1 -1 2 -2 0 -2 -2 1 -1 -1 2 -1 1 -1 -1 -2 z" fill="#3e8a3e"/><path d="M6 2 h2 l1 2 -1 1 h-2 l-1 -1 z" fill="#7fbf6f"/></svg></div>
<div class="chat" style="left:5.4px;top:312.67px;font-size:11.85px;line-height:11.85px"><span style="color:#f0a020">BBWfart</span><span style="color:#fff"> : </span><svg width="14" height="14" viewBox="0 0 13 13" style="vertical-align:-2px;margin-left:2px"><path d="M5 1 h4 l1 2 -1 2 1 1 2 1 -1 1 -2 -1 0 2 2 2 1 1 h-2 l-2 -2 h-2 l-2 2 h-2 l1 -1 2 -2 0 -2 -2 1 -1 -1 2 -1 1 -1 -1 -2 z" fill="#3e8a3e"/><path d="M6 2 h2 l1 2 -1 1 h-2 l-1 -1 z" fill="#7fbf6f"/></svg></div>
<div class="chat" style="left:5.4px;top:334.37px;font-size:11.85px;line-height:11.85px"><span style="color:#f0a020">BBWfart</span><span style="color:#fff"> : </span><svg width="14" height="14" viewBox="0 0 13 13" style="vertical-align:-2px;margin-left:2px"><path d="M5 1 h4 l1 2 -1 2 1 1 2 1 -1 1 -2 -1 0 2 2 2 1 1 h-2 l-2 -2 h-2 l-2 2 h-2 l1 -1 2 -2 0 -2 -2 1 -1 -1 2 -1 1 -1 -1 -2 z" fill="#3e8a3e"/><path d="M6 2 h2 l1 2 -1 1 h-2 l-1 -1 z" fill="#7fbf6f"/></svg></div>
<svg class="r" style="left:2.90px;top:358.30px;" width="11.7" height="10.5" viewBox="0 0 11.7 10.5"><rect width="11.7" height="10.5" fill="#20b8a0"/><rect x="1.5" y="1.5" width="3.5" height="3.3" fill="#9ff5df"/><rect x="7" y="1.5" width="3.5" height="3.3" fill="#9ff5df"/><rect x="1.5" y="6.2" width="3.5" height="3.3" fill="#9ff5df"/><rect x="7" y="6.2" width="3.5" height="3.3" fill="#9ff5df"/></svg>
<div class="chat" style="left:19.5px;top:358.97px;font-size:11.85px;line-height:11.85px"><span style="color:#7fd9b8">Justin_Case666</span><span style="color:#fff"> : But Midjourney uses huge datasets of images for</span></div>
<div class="chat" style="left:3.4px;top:377.27px;font-size:11.85px;line-height:11.85px"><span style="color:#fff">training. Are all those images used for training copyright free?</span></div>
<svg class="r" style="left:2.90px;top:398.70px;" width="11.7" height="10.5" viewBox="0 0 11.7 10.5"><rect width="11.7" height="10.5" fill="#20b8a0"/><rect x="1.5" y="1.5" width="3.5" height="3.3" fill="#9ff5df"/><rect x="7" y="1.5" width="3.5" height="3.3" fill="#9ff5df"/><rect x="1.5" y="6.2" width="3.5" height="3.3" fill="#9ff5df"/><rect x="7" y="6.2" width="3.5" height="3.3" fill="#9ff5df"/></svg>
<div class="chat" style="left:19.5px;top:398.97px;font-size:11.85px;line-height:11.85px"><span style="color:#7fd9b8">Justin_Case666</span><span style="color:#fff"> : That is Jnnx point, I think</span></div>
<svg class="r" style="left:0px;top:437px" width="253" height="141" viewBox="0 0 253 141">
<defs>
<filter id="bl" x="-10%" y="-10%" width="120%" height="120%"><feGaussianBlur stdDeviation="0.9"/></filter>
<linearGradient id="wall" x1="0" y1="0" x2="1" y2="0">
<stop offset="0" stop-color="#70d8f8"/><stop offset="0.04" stop-color="#90c8f4"/><stop offset="0.1" stop-color="#b0b4ee"/><stop offset="0.25" stop-color="#b8a8ec"/><stop offset="0.6" stop-color="#b0a0e8"/><stop offset="1" stop-color="#a48ae0"/></linearGradient>
<radialGradient id="pink" cx="0" cy="1" r="0.6"><stop offset="0" stop-color="#f090d8" stop-opacity="0.9"/><stop offset="1" stop-color="#f090d8" stop-opacity="0"/></radialGradient>
<radialGradient id="glow" cx="0.5" cy="0.5" r="0.5"><stop offset="0" stop-color="#e6e2f8"/><stop offset="1" stop-color="#c0b4ee" stop-opacity="0"/></radialGradient>
<linearGradient id="cap" x1="0" y1="0" x2="1" y2="1"><stop offset="0" stop-color="#c9c0f0"/><stop offset="0.5" stop-color="#e0dcf6"/><stop offset="1" stop-color="#b8a8e6"/></linearGradient>
</defs>
<g filter="url(#bl)">
<rect x="-6" y="-6" width="265" height="153" fill="url(#wall)"/>
<rect x="0" y="70" width="60" height="71" fill="url(#pink)"/>
<rect x="146" y="72" width="26" height="40" fill="#d2cbf0" opacity="0.85"/>
<path d="M12 0 L74.4 0 L60.4 13.1 L77.5 30.2 L64.4 47.3 L40.2 32.2 L26.2 48.3 L3 29.2 L22.1 15.1 Z" fill="#141019"/>
<rect x="6" y="61.4" width="31.2" height="27.1" fill="#17131d"/>
<rect x="39.2" y="53.3" width="35.2" height="90" fill="#1b1726"/>
<rect x="4" y="107.7" width="39.3" height="36" rx="2" fill="#1d1b26"/>
<circle cx="24" cy="127" r="11" fill="#121018"/>
<rect x="132" y="0" width="28.3" height="35.3" fill="#15121c"/>
<rect x="160.3" y="0" width="42.4" height="42.4" fill="#d6c2da"/>
<path d="M161 0 H200.6 V12 Q190 20 178 18 Q168 20 161 14 Z" fill="#26212c"/>
<rect x="170" y="28" width="30" height="4" fill="#8a7090"/>
<rect x="220.8" y="0" width="32.2" height="53.4" fill="#110e18"/>
<rect x="189.6" y="62.5" width="33.2" height="50" rx="3" fill="#17131c"/>
<circle cx="198.6" cy="89.7" r="7" fill="#c4a45c"/>
<circle cx="198.6" cy="89.7" r="2.8" fill="#2a2420"/>
<rect x="224.8" y="82.7" width="28.2" height="36.3" fill="#3a2638"/>
<path d="M232 84 Q240 80 246 88 L244 118 L230 118 Z" fill="#c08aa8" opacity="0.6"/>
<rect x="170" y="106.9" width="83" height="36.1" fill="#1d2850"/>
<rect x="176" y="115" width="41" height="12" fill="#3a70f0"/>
<rect x="150" y="119" width="103" height="4" fill="#b8b8c8" transform="rotate(-3 200 121)"/>
<rect x="160" y="128" width="93" height="3" fill="#8a8a98" transform="rotate(-5 200 130)"/>
<path d="M42.5 141 L52 116 Q62 102 90 98.6 L120 96 L150 100 Q162 110 165 141 Z" fill="#a9b8d8"/>
<path d="M108 112 L122 141 L140 141 L146 110 Z" fill="#c0cce0"/>
<path d="M72.5 55 Q70 25 95 20.5 Q102 22 100 60 L100 103 Q88 108 78 98 Z" fill="#1e1820"/>
<path d="M95 63 H145 L146 95 Q142 113 122 114 Q100 112 96 95 Z" fill="#b88478"/>
<path d="M98 90 Q104 113 122 114 Q140 112 144 92 Q130 100 120 96 Q106 100 98 90 Z" fill="#5e4038"/>
<circle cx="134" cy="95" r="3" fill="#c04050" opacity="0.8"/>
<path d="M83 62 Q84 27 112 24 Q148 22 160 44 L166 60 L150 64 Q120 70 96 75 L86 70 Z" fill="url(#cap)"/>
<path d="M96 66 L166 57 Q168 63 160 66 L130 72 L98 77 Z" fill="#b4a6e8"/>
<rect x="107.5" y="31.75" width="32.5" height="18.75" fill="#1c1a3e"/>
<rect x="111" y="37" width="26" height="8" fill="#e8e8f6" opacity="0.75"/>
<path d="M135 94 L160 90 L186 141 L150 141 Z" fill="#262230"/>
</g>
</svg>
<div class="r" style="left:0.00px;top:700.00px;width:1280.00px;height:20.00px;background:#1b1b1d;"></div>
<svg class="r" style="left:6.00px;top:704.00px;" width="12" height="12" viewBox="0 0 12 12"><path d="M0.5 1.8 L5.3 1.1 V5.6 H0.5 Z M6 1 L11.5 0.2 V5.6 H6 Z M0.5 6.3 H5.3 V10.9 L0.5 10.2 Z M6 6.3 H11.5 V11.8 L6 11 Z" fill="#fff"/></svg>
<div class="r" style="left:24.20px;top:700.30px;width:171.80px;height:18.80px;background:#f0f0f0;"></div>
<svg class="r" style="left:31.00px;top:703.00px;" width="13" height="13" viewBox="0 0 13 13"><circle cx="7.5" cy="5.5" r="3.8" fill="none" stroke="#444" stroke-width="1.1"/><path d="M4.8 8.2 L1.3 11.7" stroke="#444" stroke-width="1.2"/></svg>
<div class="t " style="left:50.80px;top:706.08px;font-size:9.120px;line-height:9.120px;color:#5a5a5a;font-weight:normal;font-family:'Liberation Sans', sans-serif;">Search</div>
<svg class="r" style="left:160.00px;top:703.00px;" width="36" height="16" viewBox="0 0 36 16"><path d="M16 1 Q17 6 22 7 Q17 8 16 13 Q15 8 10 7 Q15 6 16 1 Z" fill="#f5c518"/><path d="M24.5 7 Q25 9.5 27.5 10 Q25 10.5 24.5 13 Q24 10.5 21.5 10 Q24 9.5 24.5 7 Z" fill="#f5d35a"/><circle cx="6" cy="12" r="1.5" fill="#3aa0e8"/><circle cx="20.5" cy="2.5" r="0.9" fill="#e86a5a"/><circle cx="30" cy="13" r="0.9" fill="#9ad06a"/></svg>
<svg class="r" style="left:203.50px;top:704.00px;" width="12" height="12" viewBox="0 0 12 12"><path d="M2 6 Q2 1 6 1.5 Q10 1 10.5 5 Q11 10 6 10.5 Q1 11 2 6 Z" fill="#7b6cf6"/><path d="M6 1.5 Q10 1 10.5 5 L7 7 Z" fill="#f0a030"/><path d="M2 6 Q1 10 6 10.5 L5 6.5 Z" fill="#29b6e8"/></svg>
<div class="r" style="left:229.50px;top:708.00px;width:11.00px;height:4.00px;background:#7a7a7a;border-radius:1px;"></div>
<svg class="r" style="left:253.50px;top:703.00px;" width="12" height="14" viewBox="0 0 12 14"><path d="M3 1 L6 6 L9 1 M2 6 H10 M3 13 L6 8 L9 13" fill="none" stroke="#d0d090" stroke-width="1"/><circle cx="6" cy="7" r="1.5" fill="#e0e0c0"/></svg>
<svg class="r" style="left:278.00px;top:704.00px;" width="12" height="12" viewBox="0 0 12 12"><rect x="0.5" y="2" width="11" height="9.5" rx="1" fill="#f6f6f6"/><rect x="3" y="4.5" width="2.5" height="2.5" fill="#f25022"/><rect x="6.5" y="4.5" width="2.5" height="2.5" fill="#7fba00"/><rect x="3" y="7.5" width="2.5" height="2.5" fill="#00a4ef"/><rect x="6.5" y="7.5" width="2.5" height="2.5" fill="#ffb900"/></svg>
<svg class="r" style="left:302.00px;top:704.00px;" width="13" height="12" viewBox="0 0 13 12"><path d="M0.5 1.5 H5 L6 3 H12.5 V11 H0.5 Z" fill="#e8b83a"/><rect x="0.5" y="4" width="12" height="7" fill="#f5cf5a"/><rect x="3" y="7" width="7" height="4" fill="#3a8ed8"/></svg>
<div class="r" style="left:322.00px;top:700.00px;width:23.40px;height:20.00px;background:#3c3c3e;"></div>
<div class="r" style="left:346.40px;top:700.00px;width:23.40px;height:20.00px;background:#b8651e;"></div>
<div class="r" style="left:325.70px;top:718.80px;width:16.00px;height:1.20px;background:#c9a3e0;"></div>
<div class="r" style="left:350.00px;top:718.80px;width:16.00px;height:1.20px;background:#c9a3e0;"></div>
<div class="r" style="left:374.50px;top:718.80px;width:16.00px;height:1.20px;background:#c9a3e0;"></div>
<div class="r" style="left:399.00px;top:718.80px;width:16.00px;height:1.20px;background:#c9a3e0;"></div>
<div class="r" style="left:423.30px;top:718.80px;width:16.00px;height:1.20px;background:#c9a3e0;"></div>
<svg class="r" style="left:328.00px;top:704.00px;" width="12" height="12" viewBox="0 0 12 12"><path d="M1 2 L3 0.5 H9 L11 2 L11 6 L9 10 L6 11.8 L3 10 L1 6 Z" fill="#e8462a"/><path d="M3.5 3.5 L6 8 L8.5 3.5" fill="none" stroke="#fff" stroke-width="1"/></svg>
<svg class="r" style="left:352.00px;top:704.00px;" width="12" height="12" viewBox="0 0 12 12"><circle cx="6" cy="6" r="5.8" fill="#6b6ed8"/><rect x="3" y="4" width="6" height="4.5" rx="2" fill="#fff"/><circle cx="4.7" cy="6.2" r="0.7" fill="#6b6ed8"/><circle cx="7.3" cy="6.2" r="0.7" fill="#6b6ed8"/></svg>
<svg class="r" style="left:376.50px;top:704.00px;" width="12" height="12" viewBox="0 0 12 12"><circle cx="6" cy="6" r="5.8" fill="#1ed760"/><path d="M2.8 4.3 Q6 3.2 9.2 4.6 M3.2 6.2 Q6 5.4 8.8 6.6 M3.6 8 Q6 7.4 8.4 8.4" fill="none" stroke="#111" stroke-width="0.9"/></svg>
<svg class="r" style="left:401.00px;top:704.00px;" width="12" height="12" viewBox="0 0 12 12"><circle cx="6" cy="6" r="5.8" fill="#e8453c"/><path d="M4 4 L8 8 M8 4 L4 8" stroke="#fff" stroke-width="1.1"/></svg>
<svg class="r" style="left:425.30px;top:704.00px;" width="12" height="12" viewBox="0 0 12 12"><circle cx="6" cy="6" r="5.3" fill="#1b1b1d" stroke="#aaa" stroke-width="1"/><circle cx="6" cy="6" r="2" fill="none" stroke="#aaa" stroke-width="0.9"/></svg>
<svg class="r" style="left:1121.00px;top:705.00px;" width="11" height="8" viewBox="0 0 11 8"><path d="M1 6.5 L5.5 2 L10 6.5" fill="none" stroke="#ddd" stroke-width="1.1"/></svg>
<svg class="r" style="left:1136.00px;top:704.00px;" width="13" height="12" viewBox="0 0 13 12"><rect x="2" y="1" width="10" height="7" fill="none" stroke="#ddd" stroke-width="1"/><path d="M7 8 V10.5 M4 10.5 H10 M0.5 3 V9" stroke="#ddd" stroke-width="1"/></svg>
<svg class="r" style="left:1152.00px;top:704.00px;" width="13" height="12" viewBox="0 0 13 12"><path d="M1 4 H3.5 L6.5 1.5 V10.5 L3.5 8 H1 Z" fill="none" stroke="#ddd" stroke-width="1"/><path d="M8.5 4 Q9.5 6 8.5 8 M10.3 2.8 Q12 6 10.3 9.2" fill="none" stroke="#ddd" stroke-width="0.9"/></svg>
<svg class="r" style="left:1169.00px;top:704.00px;" width="13" height="13" viewBox="0 0 13 13"><rect x="1" y="1" width="10" height="9" fill="none" stroke="#ddd" stroke-width="1"/><rect x="3" y="3" width="4" height="4" fill="#bbb"/><circle cx="9.5" cy="10" r="2" fill="#f5a020"/></svg>
<svg class="r" style="left:1187.00px;top:704.00px;" width="13" height="12" viewBox="0 0 13 12"><path d="M1.5 10.5 Q3 6 6 4 Q9 2 11 1.5 M3 8 Q5 9 7 6.5 M6 9.5 Q8 8 10 5" fill="none" stroke="#ddd" stroke-width="1"/></svg>
<div class="t " style="left:1209.80px;top:706.99px;font-size:7.930px;line-height:7.930px;color:#f0f0f0;font-weight:normal;font-family:'Liberation Sans', sans-serif;">9:50 AM</div>
<svg class="r" style="left:1252.50px;top:703.50px;" width="13" height="13" viewBox="0 0 13 13"><path d="M1 1 H12 V9 H8 L6.5 11.5 L5 9 H1 Z" fill="none" stroke="#ddd" stroke-width="1"/></svg></div></body></html>
